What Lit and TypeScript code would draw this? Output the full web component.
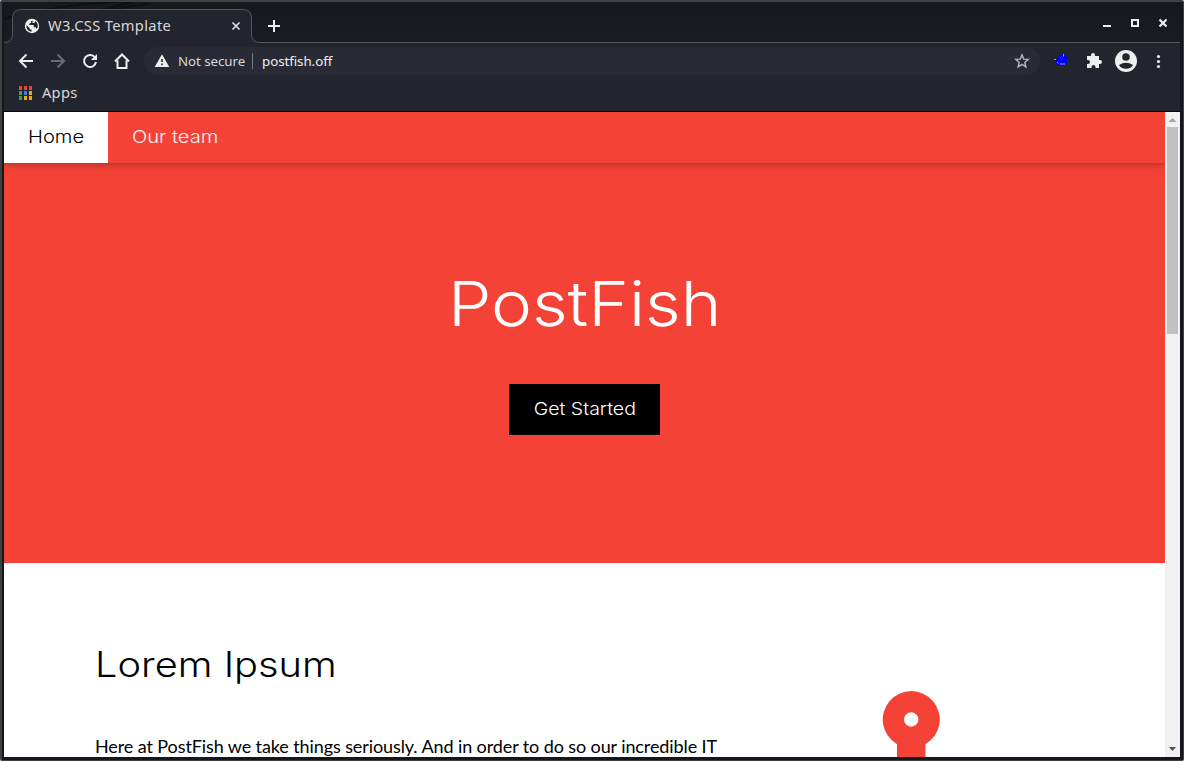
import { LitElement, html, css } from "lit";
import { customElement } from "lit/decorators.js";

@customElement("browser-chrome")
class BrowserChrome extends LitElement {
  static styles = css`
    :host { display: block; background: #23252e; color: #eeeeec; font-family: "Noto Sans", sans-serif; }
    svg { display: block; flex: none; }
    .strip { position: relative; height: 41px; display: flex; background: linear-gradient(#17181d, #1b1c22); overflow: hidden; }
    .outline { position: absolute; left: 0; top: 0; }
    .tab { position: relative; width: 240px; height: 34px; margin: 7px 0 0 8px; display: flex; align-items: center; box-sizing: border-box; padding: 0 10px 0 12px; font-size: 14.67px; }
    .title { margin: 0 0 2px 8px; flex: 1; color: #d8d8d8; white-space: nowrap; letter-spacing: .34px; }
    .plus { position: relative; margin: 16px 0 0 12px; }
    .controls { position: relative; margin-left: auto; display: flex; gap: 12px; padding: 13px 9px 0 0; }
    .bar { height: 36px; display: flex; align-items: center; padding: 0 10px 0 10px; }
    .nav { display: flex; gap: 8px; margin-left: 0; }
    .address { width: 896px; height: 28px; margin-left: 10px; border-radius: 14px; background: #282a35; display: flex; align-items: center; font-size: 13.33px; box-sizing: border-box; padding: 0 10px; white-space: nowrap; letter-spacing: -.06px; }
    .secure { margin-left: 8px; width: 74px; color: #d7d8d8; }
    .rule { width: 1px; height: 16px; background: #777982; }
    .url { margin-left: 9px; flex: 1; }
    .ext { display: flex; align-items: center; }
    .bookmarks { height: 33px; border-bottom: 1px solid #050608; display: flex; align-items: flex-start; padding: 3px 0 0 15px; font-size: 14.67px; line-height: 20px; color: #d8d8d8; box-sizing: border-box; letter-spacing: .25px; }
    .apps { margin-left: 9px; }
    .grid { margin-top: 4px; }
  `;
  render() {
    return html`
      <div class="strip">
        <svg class="outline" width="1176" height="41" fill="none">
          <path d="M0 17Q70-3 180-2M80 12L128 0M100 8L145 2" stroke="#0e0f13" stroke-width="2"/>
          <path d="M0 40.500Q8.500 40.500 8.500 32V16Q8.500 7.500 17 7.500H239Q247.500 7.500 247.500 16V32Q247.500 40.500 256 40.500V41H0Z" fill="#23252e"/>
          <path d="M0 40.500Q8.500 40.500 8.500 32V16Q8.500 7.500 17 7.500H239Q247.500 7.500 247.500 16V32Q247.500 40.500 256 40.500H1176" stroke="#55575b"/>
        </svg>
        <div class="tab">
          <svg width="16" height="16" viewBox="0 0 16 16"><circle cx="8" cy="8" r="7.200" fill="#eeeeec"/><path d="M8.500 2.300L7 3.500V5L5.300 5.500V7H9.800V9.300H12V11L13.700 9.500Q14.500 5 11.200 3L10.500 5H8.500ZM2.300 7L5.700 10.200V11.500H7.500V13.800Q2.300 13 2.300 7Z" fill="#23252e"/></svg>
          <span class="title">W3.CSS Template</span>
          <svg width="12" height="12"><path d="M2.500 2.500L9.500 9.500M9.500 2.500L2.500 9.500" stroke="#dededc" stroke-width="1.700"/></svg>
        </div>
        <svg class="plus" width="16" height="16"><path d="M4 8H16M10 2V14" stroke="#eeeeec" stroke-width="2"/></svg>
        <div class="controls">
          <svg width="16" height="16"><path d="M4 11H12" stroke="#eeeeec" stroke-width="2"/></svg>
          <svg width="16" height="16"><path d="M5 5H11V11H5Z" fill="none" stroke="#eeeeec" stroke-width="2"/></svg>
          <svg width="16" height="16"><path d="M4.500 4.500L11.500 11.500M11.500 4.500L4.500 11.500" stroke="#eeeeec" stroke-width="2.200"/></svg>
        </div>
      </div>
      <div class="bar">
        <div class="nav">
          <svg width="24" height="24" fill="none" stroke="#eeeeec" stroke-width="2"><path d="M19 12H6M12.500 5.500L6 12L12.500 18.500"/></svg>
          <svg width="24" height="24" fill="none" stroke="#6b6c70" stroke-width="2"><path d="M5 12H18M11.500 5.500L18 12L11.500 18.500"/></svg>
          <svg width="24" height="24" fill="none" stroke="#eeeeec" stroke-width="2"><path d="M17 8.500A6 6 0 1 0 18 13"/><path d="M19 5V11H13Z" fill="#eeeeec" stroke="none"/></svg>
          <svg width="24" height="24" fill="none" stroke="#eeeeec" stroke-width="2"><path d="M7.500 11.500V19H16.500V11.500M5 12.500L12 5.500L19 12.500"/></svg>
        </div>
        <div class="address">
          <svg width="16" height="16"><path d="M8 1.300L15.300 14H.7Z" fill="#eeeeec"/><path d="M8 6V9M8 10.500V12.300" stroke="#282a35" stroke-width="1.600"/></svg>
          <span class="secure">Not secure</span><span class="rule"></span><span class="url">postfish.off</span>
          <svg width="16" height="16"><path d="M8 1.800L9.700 6.100L14.300 6.400L10.800 9.400L11.900 13.900L8 11.400L4.100 13.900L5.200 9.400L1.700 6.400L6.300 6.100Z" fill="none" stroke="#b5b6b8" stroke-width="1.400"/></svg>
        </div>
        <div class="ext">
          <svg width="126" height="32" fill="#eeeeec">
            <path d="M14 14L17 14Q18 10 21.500 9.500L23.500 8.500L24 10H26.500Q28 13 27 17Q25 21 21 21Q16.500 20.500 16 16.500Z" fill="#0000fc"/><path d="M14 14.500H16M17 17L18.500 18.500M20 19H25M23.500 9V11.500" stroke="#b7bcff" stroke-width=".8" fill="none"/>
            <path d="M48 11H51V10A2 2 0 0 1 55 10V11H59V15H60A2 2 0 0 1 60 19H59V23H55.500V22A2 2 0 0 0 51.500 22V23H47V19H48A2 2 0 0 0 48 15H47V11Z"/>
            <circle cx="86" cy="16" r="11"/><circle cx="86" cy="12" r="3.800" fill="#23252e"/><path d="M79 20Q86 15.500 93 20Q91 23.800 86 23.800Q81 23.800 79 20Z" fill="#23252e"/>
            <circle cx="118.500" cy="11.500" r="1.600"/><circle cx="118.500" cy="16.500" r="1.600"/><circle cx="118.500" cy="21.500" r="1.600"/>
          </svg>
        </div>
      </div>
      <div class="bookmarks">
        <svg class="grid" width="14" height="14">
          <path d="M0 0H3V4H0ZM5 0H8V4H5ZM10 0H13V4H10Z" fill="#ea4335"/><path d="M0 5H3V9H0ZM0 10H3V14H0Z" fill="#34a160"/><path d="M5 5H8V9H5Z" fill="#2684f5"/><path d="M10 5H13V9H10ZM5 10H8V14H5ZM10 10H13V14H10Z" fill="#f5a900"/>
        </svg>
        <span class="apps">Apps</span>
      </div>`;
  }
}

@customElement("site-page")
class SitePage extends LitElement {
  static styles = css`
    :host { display: flex; height: 645px; overflow: hidden; background: #fff; }
    .site { width: 1161px; height: 100%; overflow: hidden; font-family: Inter, sans-serif; font-weight: 300; }
    nav { position: relative; height: 51px; display: flex; background: #f44336; color: #fff; font-size: 17.500px; box-shadow: 0 2px 5px rgba(0,0,0,.16), 0 2px 10px rgba(0,0,0,.12); }
    .item { box-sizing: border-box; padding: 12px 0 0 24px; line-height: 25px; white-space: nowrap; }
    .wide { display: inline-block; transform: scaleX(1.137); transform-origin: left; white-space: nowrap; }
    .item .wide { transform: scaleX(1.15); }
    .home { width: 104px; background: #fff; color: #000; }
    .team { color: #fff0ee; }
    header { height: 400px; background: #f44336; color: #fff; display: flex; flex-direction: column; align-items: center; }
    h1 { margin: 93px 0 0; font-size: 62px; line-height: 96px; font-weight: 300; }
    h1 .wide, .button .wide { transform-origin: center; transform: scaleX(1.115); }
    .button { margin-top: 32px; width: 151px; height: 51px; box-sizing: border-box; padding-top: 12px; text-align: center; line-height: 25px; background: #000; font-size: 17.500px; }
    .row { display: flex; padding: 64px 0 0 91px; }
    .copy { width: 774px; }
    h2 { margin: 10px 0 0; font-size: 35px; line-height: 54px; font-weight: 300; }
    p { margin: 42px 0 0; font-family: Lato, sans-serif; font-size: 18px; line-height: 27px; font-weight: 400; white-space: nowrap; color: #000; letter-spacing: -.1px; }
    .anchor { display: block; margin: 64px 0 0 13px; }
    .scroll { width: 15px; height: 100%; background: #f1f1f1; display: flex; flex-direction: column; align-items: center; }
    .thumb { width: 11px; height: 207px; background: #c1c1c1; }
    .scroll svg { display: block; }
    .down { margin-top: auto; }
  `;
  render() {
    return html`
      <div class="site">
        <nav><div class="item home"><span class="wide">Home</span></div><div class="item team"><span class="wide">Our team</span></div></nav>
        <header><h1><span class="wide">PostFish</span></h1><div class="button"><span class="wide">Get Started</span></div></header>
        <section class="row">
          <div class="copy"><h2><span class="wide">Lorem Ipsum</span></h2><p>Here at PostFish we take things seriously. And in order to do so our incredible IT</p></div>
          <svg class="anchor" width="60" height="80"><path d="M15 80V53.200A28.500 28.500 0 1 1 43.500 53.200V80Z" fill="#f44336"/><circle cx="29.200" cy="28.500" r="7.200" fill="#fff"/></svg>
        </section>
      </div>
      <div class="scroll">
        <svg width="15" height="15"><path d="M7.500 6L11.500 10H3.500Z" fill="#a3a3a3"/></svg>
        <div class="thumb"></div>
        <svg class="down" width="15" height="15"><path d="M4 5H11L7.500 9Z" fill="#505050"/></svg>
      </div>`;
  }
}

@customElement("app-root")
class AppRoot extends LitElement {
  static styles = css`
    :host { display: block; width: 1184px; height: 761px; background: #fff; }
    .frame { box-sizing: border-box; width: 1184px; height: 761px; border: solid #3e4042; border-width: 2px 1px 1px 2px; border-radius: 2px; background: #15171c; padding: 0 3px 3px 2px; overflow: hidden; }
  `;
  render() {
    return html`<div class="frame"><browser-chrome></browser-chrome><site-page></site-page></div>`;
  }
}
